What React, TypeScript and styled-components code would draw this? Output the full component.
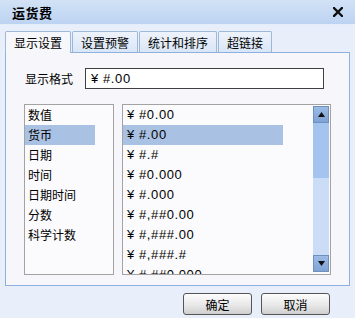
import { createGlobalStyle } from 'styled-components';
import styled from 'styled-components';
import { useState } from 'react';

const GlobalStyle = createGlobalStyle`
    html, body {
        margin: 0;
        padding: 0;
        background: #e6eefa;
    }
    body {
        font-family: "Noto Sans CJK SC", "DejaVu Sans", sans-serif;
        font-size: 12px;
        color: #000;
    }
`;

const Dialog = styled.div`
    width: 355px;
    height: 318px;
    display: flex;
    flex-direction: column;
    background: #e8effa;
    overflow: hidden;
`;

const TitleBar = styled.div`
    height: 25px;
    box-sizing: border-box;
    display: flex;
    align-items: center;
    justify-content: space-between;
    padding: 0 12px 0 12px;
    background: linear-gradient(#d2e2f6, #bcd3f1);
    border-bottom: 1px solid #e4eefb;
`;

const Title = styled.span`
    font-weight: bold;
    font-size: 13px;
    letter-spacing: 0.5px;
`;

const CloseIcon = () => (
    <svg width="10" height="10" viewBox="0 0 10 10">
        <path d="M1 1 L9 9 M9 1 L1 9" stroke="#111" strokeWidth="2.4" strokeLinecap="square" />
    </svg>
);

const TabStrip = styled.div`
    display: flex;
    gap: 1px;
    padding: 6px 5px 0 5px;
    height: 21px;
`;

const Tab = styled.div<{ active?: boolean }>`
    padding: 0 8px;
    display: flex;
    align-items: center;
    border: 1px solid #9fb8d8;
    border-bottom: none;
    border-radius: 2px 2px 0 0;
    background: ${p => (p.active ? '#f6f7fb' : 'linear-gradient(#eef3fb, #d9e6f7)')};
    font-size: 12px;
    margin-bottom: ${p => (p.active ? '-1px' : '0')};
    position: relative;
`;

const Panel = styled.div`
    margin: 0 5px;
    height: 234px;
    box-sizing: border-box;
    border: 1px solid #8eb0dc;
    background: #f7f7fb;
    padding: 15px 18px 0 18px;
    display: flex;
    flex-direction: column;
`;

const FormatRow = styled.div`
    display: flex;
    align-items: center;
    height: 21px;
`;

const Label = styled.span`
    width: 60px;
    padding-left: 1px;
`;

const FormatInput = styled.input`
    width: 239px;
    height: 21px;
    box-sizing: border-box;
    border: 1px solid #404040;
    background: #fff;
    padding: 0 0 0 5px;
    font-family: "Liberation Sans", sans-serif;
    font-size: 13px;
    letter-spacing: 0.6px;
    outline: none;
`;

const ListsRow = styled.div`
    display: flex;
    gap: 8px;
    margin-top: 15px;
`;

const ListBox = styled.div<{ w: number; h: number }>`
    width: ${p => p.w}px;
    height: ${p => p.h}px;
    box-sizing: border-box;
    border: 1px solid #a3a3a3;
    background: #fbfbfd;
    display: flex;
    overflow: hidden;
`;

const Items = styled.div<{ w: number }>`
    width: ${p => p.w}px;
    display: flex;
    flex-direction: column;
`;

const Item = styled.div<{ selected?: boolean; pad: number; mono?: boolean }>`
    height: 20px;
    flex: none;
    line-height: 20px;
    padding-left: ${p => p.pad}px;
    background: ${p => (p.selected ? '#a9c1e2' : 'transparent')};
    white-space: nowrap;
    font-family: ${p => (p.mono ? '"Liberation Sans", "Noto Sans CJK SC", sans-serif' : 'inherit')};
    font-size: ${p => (p.mono ? '13px' : '12px')};
    letter-spacing: ${p => (p.mono ? '0.6px' : '0')};
`;

const ScrollBar = styled.div`
    margin-left: auto;
    width: 16px;
    display: flex;
    flex-direction: column;
    margin-right: 1px;
    padding: 1px 0 2px 0;
`;

const ScrollButton = styled.div`
    height: 17px;
    flex: none;
    box-sizing: border-box;
    border: 1px solid #6f8fbd;
    background: linear-gradient(#9cbbe6, #7fa3d6);
    display: flex;
    align-items: center;
    justify-content: center;
`;

const Thumb = styled.div`
    height: 55px;
    flex: none;
    background: #a4c3ee;
`;

const Track = styled.div`
    flex: 1;
    background: #cadcf6;
`;

const Arrow = ({ down }: { down?: boolean }) => (
    <svg width="7" height="5" viewBox="0 0 7 5">
        <path d={down ? 'M0 0 H7 L3.5 5 Z' : 'M0 5 H7 L3.5 0 Z'} fill="#111" />
    </svg>
);

const Footer = styled.div`
    display: flex;
    justify-content: flex-end;
    gap: 9px;
    padding: 7px 25px 0 0;
`;

const Button = styled.button`
    width: 69px;
    height: 22px;
    border: 1px solid #555;
    border-radius: 3px;
    background: linear-gradient(#fdfdfd, #e8e8e8 55%, #cfcfcf);
    font-family: "Noto Sans CJK SC", sans-serif;
    font-size: 12px;
    padding: 0;
    color: #000;
`;

const types = ['数值', '货币', '日期', '时间', '日期时间', '分数', '科学计数'];
const formats = [
    '¥ #0.00',
    '¥ #.00',
    '¥ #.#',
    '¥ #0.000',
    '¥ #.000',
    '¥ #,##0.00',
    '¥ #,###.00',
    '¥ #,###.#',
    '¥ #,##0.000',
];

function App() {
    const [type, setType] = useState(1);
    const [fmt, setFmt] = useState(1);

    return (
        <Dialog>
            <GlobalStyle />
            <TitleBar>
                <Title>运货费</Title>
                <CloseIcon />
            </TitleBar>
            <TabStrip>
                <Tab active>显示设置</Tab>
                <Tab>设置预警</Tab>
                <Tab>统计和排序</Tab>
                <Tab>超链接</Tab>
            </TabStrip>
            <Panel>
                <FormatRow>
                    <Label>显示格式</Label>
                    <FormatInput value={formats[fmt]} readOnly />
                </FormatRow>
                <ListsRow>
                    <ListBox w={90} h={171}>
                        <Items w={70}>
                            {types.map((t, i) => (
                                <Item key={t} pad={3} selected={i === type} onClick={() => setType(i)}>
                                    {t}
                                </Item>
                            ))}
                        </Items>
                    </ListBox>
                    <ListBox w={209} h={171}>
                        <Items w={160}>
                            {formats.map((f, i) => (
                                <Item key={f} pad={4} mono selected={i === fmt} onClick={() => setFmt(i)}>
                                    {f}
                                </Item>
                            ))}
                        </Items>
                        <ScrollBar>
                            <ScrollButton>
                                <Arrow />
                            </ScrollButton>
                            <Thumb />
                            <Track />
                            <ScrollButton>
                                <Arrow down />
                            </ScrollButton>
                        </ScrollBar>
                    </ListBox>
                </ListsRow>
            </Panel>
            <Footer>
                <Button>确定</Button>
                <Button>取消</Button>
            </Footer>
        </Dialog>
    );
}

export default App;
